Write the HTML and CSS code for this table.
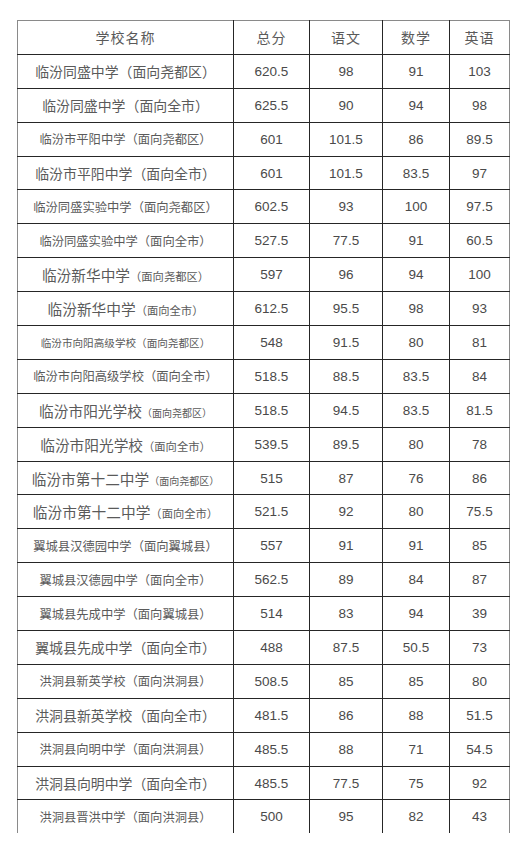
FILE: index.html
```html
<!DOCTYPE html>
<html lang="zh">
<head>
<meta charset="utf-8">
<title>成绩表</title>
<link rel="stylesheet" href="styles.css">
</head>
<body>
<div class="wrap">
<table class="scores">
<colgroup>
<col class="c1"><col class="c2"><col class="c3"><col class="c4"><col class="c5">
</colgroup>
<thead>
<tr><th class="hd">学校名称</th><th class="hd">总分</th><th class="hd">语文</th><th class="hd">数学</th><th class="hd">英语</th></tr>
</thead>
<tbody>
<tr><td class="nm s14">临汾同盛中学（面向尧都区）</td><td>620.5</td><td>98</td><td>91</td><td>103</td></tr>
<tr><td class="nm s14">临汾同盛中学（面向全市）</td><td>625.5</td><td>90</td><td>94</td><td>98</td></tr>
<tr><td class="nm s12">临汾市平阳中学（面向尧都区）</td><td>601</td><td>101.5</td><td>86</td><td>89.5</td></tr>
<tr><td class="nm s14">临汾市平阳中学（面向全市）</td><td>601</td><td>101.5</td><td>83.5</td><td>97</td></tr>
<tr><td class="nm s12">临汾同盛实验中学（面向尧都区）</td><td>602.5</td><td>93</td><td>100</td><td>97.5</td></tr>
<tr><td class="nm s12">临汾同盛实验中学（面向全市）</td><td>527.5</td><td>77.5</td><td>91</td><td>60.5</td></tr>
<tr><td class="nm s15">临汾新华中学<span class="p11">（面向尧都区）</span></td><td>597</td><td>96</td><td>94</td><td>100</td></tr>
<tr><td class="nm s15">临汾新华中学<span class="p11">（面向全市）</span></td><td>612.5</td><td>95.5</td><td>98</td><td>93</td></tr>
<tr><td class="nm s10">临汾市向阳高级学校（面向尧都区）</td><td>548</td><td>91.5</td><td>80</td><td>81</td></tr>
<tr><td class="nm s12">临汾市向阳高级学校（面向全市）</td><td>518.5</td><td>88.5</td><td>83.5</td><td>84</td></tr>
<tr><td class="nm s15">临汾市阳光学校<span class="p10">（面向尧都区）</span></td><td>518.5</td><td>94.5</td><td>83.5</td><td>81.5</td></tr>
<tr><td class="nm s15">临汾市阳光学校<span class="p11">（面向全市）</span></td><td>539.5</td><td>89.5</td><td>80</td><td>78</td></tr>
<tr><td class="nm s15">临汾市第十二中学<span class="p10">（面向尧都区）</span></td><td>515</td><td>87</td><td>76</td><td>86</td></tr>
<tr><td class="nm s15">临汾市第十二中学<span class="p11">（面向全市）</span></td><td>521.5</td><td>92</td><td>80</td><td>75.5</td></tr>
<tr><td class="nm s12">翼城县汉德园中学（面向翼城县）</td><td>557</td><td>91</td><td>91</td><td>85</td></tr>
<tr><td class="nm s12">翼城县汉德园中学（面向全市）</td><td>562.5</td><td>89</td><td>84</td><td>87</td></tr>
<tr><td class="nm s12">翼城县先成中学（面向翼城县）</td><td>514</td><td>83</td><td>94</td><td>39</td></tr>
<tr><td class="nm s14">翼城县先成中学（面向全市）</td><td>488</td><td>87.5</td><td>50.5</td><td>73</td></tr>
<tr><td class="nm s12">洪洞县新英学校（面向洪洞县）</td><td>508.5</td><td>85</td><td>85</td><td>80</td></tr>
<tr><td class="nm s14">洪洞县新英学校（面向全市）</td><td>481.5</td><td>86</td><td>88</td><td>51.5</td></tr>
<tr><td class="nm s12">洪洞县向明中学（面向洪洞县）</td><td>485.5</td><td>88</td><td>71</td><td>54.5</td></tr>
<tr><td class="nm s14">洪洞县向明中学（面向全市）</td><td>485.5</td><td>77.5</td><td>75</td><td>92</td></tr>
<tr class="last"><td class="nm s12">洪洞县晋洪中学（面向洪洞县）</td><td>500</td><td>95</td><td>82</td><td>43</td></tr>
</tbody>
</table>
</div>
</body>
</html>
```

FILE: styles.css
```css
html, body {
  margin: 0;
  padding: 0;
  background: #ffffff;
}

.wrap {
  padding: 20px 0 0 17px;
}

.scores {
  border-collapse: collapse;
  table-layout: fixed;
  width: 492px;
  border: 1px solid #8a8a8a;
  border-bottom: none;
  color: #4a4a4a;
}

.c1 { width: 216px; }
.c2 { width: 76px; }
.c3 { width: 73px; }
.c4 { width: 67px; }
.c5 { width: 60px; }

.scores th,
.scores td {
  height: 32.9px;
  padding: 0;
  text-align: center;
  vertical-align: middle;
  border: 1px solid #262626;
  white-space: nowrap;
  overflow: hidden;
}

.scores tr:first-child th { border-top-color: #8a8a8a; }
.scores th:first-child,
.scores td:first-child { border-left-color: #8a8a8a; }
.scores th:last-child,
.scores td:last-child { border-right-color: #8a8a8a; }

.scores tr.last td { border-bottom: none; }

.hd {
  font-family: "Noto Sans CJK SC", sans-serif;
  font-weight: 400;
  font-size: 14px;
  letter-spacing: 1px;
  color: #5a5a5a;
}

.scores td {
  font-family: "Liberation Sans", Arial, sans-serif;
  font-size: 13.5px;
  color: #4a4a4a;
}

.scores td.nm {
  font-family: "Noto Sans CJK SC", sans-serif;
  color: #5a5a5a;
  letter-spacing: 0;
}

.s14 { font-size: 13.9px !important; }
.s12 { font-size: 12.3px !important; }
.s10 { font-size: 10.6px !important; }
.s15 { font-size: 14.7px !important; }

.p11 { font-size: 11.3px; }
.p10 { font-size: 10px; }
```
